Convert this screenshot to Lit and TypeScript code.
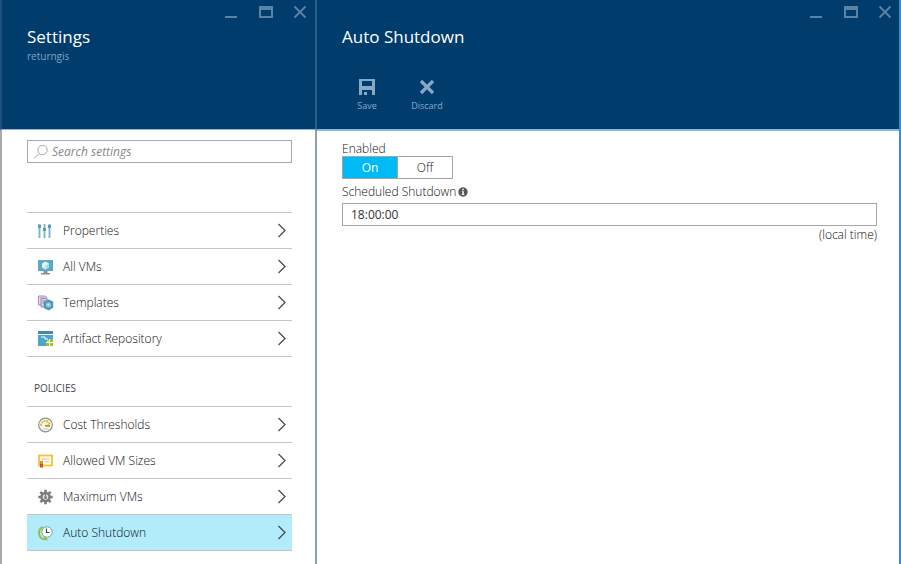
import { LitElement, html, svg, css } from "lit";
import { customElement, property, state } from "lit/decorators.js";
import { classMap } from "lit/directives/class-map.js";

const icons: Record<string, unknown> = {
  properties: svg`
    <g fill="#c3e0ea"><rect x="0" y="1" width="3" height="14"/><rect x="5" y="1" width="3" height="14"/><rect x="10" y="1" width="3" height="14"/></g>
    <g fill="#7fb2c8"><rect x="1" y="1" width="1" height="14"/><rect x="6" y="1" width="1" height="14"/><rect x="11" y="1" width="1" height="14"/></g>
    <g fill="#5c9ab6"><rect x="0" y="2" width="3" height="3"/><rect x="5" y="5" width="3" height="3"/><rect x="10" y="2" width="3" height="3"/></g>`,
  vms: svg`
    <rect x="0" y="1" width="15" height="11" fill="#5aa9c8"/>
    <path d="M7.500 2.500l3.500 2v4l-3.500 2-3.500-2v-4z" fill="#e0f5fa"/><path d="M7.500 6.500l3.500-2v4l-3.500 2z" fill="#a4dbea"/>
    <path d="M5.500 12h4v2h2.500v1.500H3V14h2.500z" fill="#8b9296"/>`,
  templates: svg`
    <path d="M.5 1h6.500l2 2v7H.5z" fill="#e7dcec" stroke="#a98dbb"/><path d="M3 3.500H8l2 2V12H3z" fill="#d9cae0" stroke="#a08aaf"/>
    <path d="M2.500 3h4M4.500 6h4M4.500 8h2" stroke="#a08aaf"/>
    <path d="M10.500 4.500l4.700 2v6.300l-4.700 2.700-4.700-2.500V6.800z" fill="#5296ad"/><circle cx="10.500" cy="10" r="2.700" fill="#72cbdc"/><circle cx="10.500" cy="9.800" r="1" fill="#e8fafc"/>`,
  repository: svg`
    <rect x="0" y="0" width="15" height="3" fill="#4489a9"/>
    <path d="M0 4h15v4h-4v3H8v4H0z" fill="#4ba6cf"/>
    <path d="M3 6h4v2h3" fill="none" stroke="#fff"/>
    <path d="M12 8h3v3h-3zM8 12h3v3H8zM12 12h3v3h-3z" fill="#a2c617"/><path d="M9 9h2v2H9z" fill="#c5dc62"/>`,
  cost: svg`
    <circle cx="7.500" cy="8" r="6.800" fill="#f8f7ef" stroke="#8d9092" stroke-width="1.200"/>
    <path d="M3.200 9a4.300 4.300 0 0 1 8.500-1.500" fill="none" stroke="#d6c23b" stroke-width="2" stroke-dasharray="2 .7"/>
    <path d="M6.500 8l5.500-.5v2.200H7.500z" fill="#b99a18"/><path d="M4.500 12h6" stroke="#c4c6c7"/>`,
  sizes: svg`
    <rect x="1" y="2.500" width="13" height="10" fill="#fffdf2" stroke="#f3c33c" stroke-width="1.800"/>
    <path d="M3.500 6h8M7 9h4.500" stroke="#d9c48c" stroke-width="1"/>
    <rect x="2" y="8" width="3" height="4" fill="#e08a38"/><path d="M2 11h3v4l-1.500-1L2 15z" fill="#c9561a"/>`,
  gear: svg`
    <path d="M7.500 .8v14.400M.3 8h14.400M2.400 2.900l10.200 10.200M12.600 2.900L2.400 13.100" stroke="#7a7c7e" stroke-width="2.600"/>
    <circle cx="7.500" cy="8" r="5.300" fill="#7a7c7e"/><circle cx="7.500" cy="8" r="2.800" fill="#dfe0e1"/><circle cx="7.500" cy="8.500" r="1.500" fill="#7a7c7e"/><path d="M7.500 8V4.500" stroke="#7a7c7e"/>`,
  clock: svg`
    <path d="M5 2A6.500 6.500 0 0 0 5 14" fill="none" stroke="#8cc152" stroke-width="2"/>
    <path d="M5.500 3.500A5.500 5.500 0 0 0 7 13.500" fill="none" stroke="#c7e59f" stroke-width="1.200"/>
    <path d="M4 15l6 .2-2.500-4.200z" fill="#8cc152"/>
    <circle cx="9" cy="7" r="5.200" fill="#fff" stroke="#7aa5ae"/><path d="M8.500 3.500V7.500h3" fill="none" stroke="#33474f" stroke-width="1.200"/>`,
};

interface Item { icon: string; label: string }

const general: Item[] = [
  { icon: "properties", label: "Properties" },
  { icon: "vms", label: "All VMs" },
  { icon: "templates", label: "Templates" },
  { icon: "repository", label: "Artifact Repository" },
];
const policies: Item[] = [
  { icon: "cost", label: "Cost Thresholds" },
  { icon: "sizes", label: "Allowed VM Sizes" },
  { icon: "gear", label: "Maximum VMs" },
  { icon: "clock", label: "Auto Shutdown" },
];

@customElement("window-controls")
class WindowControls extends LitElement {
  static styles = css`
    :host { display: flex; justify-content: flex-end; gap: 18px; }
    button { border: 0; padding: 0; background: none; color: #5a84a6; width: 16px; height: 16px; cursor: pointer; }
    svg { display: block; }
  `;
  render() {
    return html`
      <button aria-label="Minimize"><svg width="16" height="16"><path d="M1 12h12v2H1z" fill="currentColor"/></svg></button>
      <button aria-label="Maximize"><svg width="16" height="16"><path d="M1 2h14v12H1zM3 6v6h10V6z" fill="currentColor" fill-rule="evenodd"/></svg></button>
      <button aria-label="Close"><svg width="16" height="16"><path d="M2.500 2.500l11 11M13.500 2.500l-11 11" stroke="currentColor" stroke-width="1.800"/></svg></button>
    `;
  }
}

@customElement("settings-list")
class SettingsList extends LitElement {
  @property({ attribute: false }) items: Item[] = [];
  @property() selected = "";
  static styles = css`
    :host { display: block; }
    ul { list-style: none; margin: 0; padding: 0; border-bottom: 1px solid #c3c7c9; }
    li { border-top: 1px solid #c3c7c9; }
    a { display: flex; align-items: center; gap: 9px; height: 35px; padding: 0 4px 0 11px; color: inherit; text-decoration: none; }
    .label { flex: 1; }
    .selected { background: #b2ebf9; }
    svg { display: block; flex: none; }
  `;
  render() {
    return html`<ul>${this.items.map((item) => html`
      <li>
        <a href="#" class=${classMap({ selected: item.label === this.selected })}>
          <svg width="16" height="16" viewBox="0 0 16 16" aria-hidden="true">${icons[item.icon]}</svg>
          <span class="label">${item.label}</span>
          <svg width="12" height="16" aria-hidden="true"><path d="M2.500 1L9 7.500 2.500 14" fill="none" stroke="#3f4850" stroke-width="1.200"/></svg>
        </a>
      </li>`)}</ul>`;
  }
}

@customElement("app-root")
class AppRoot extends LitElement {
  @state() private enabled = true;

  static styles = css`
    :host {
      display: grid; grid-template-columns: 317px minmax(0, 1fr); min-height: 100vh;
      font: 300 12px/16px "Open Sans", "Noto Sans", sans-serif; color: #0c0f12; background: #fff;
    }
    * { box-sizing: border-box; }
    .blade { display: flex; flex-direction: column; }
    .settings { border-left: 2px solid #a9a9ab; border-right: 2px solid #8fa0ab; }
    .detail { border-right: 2px solid #3a8ad4; }
    header { height: 130px; background: #003c6c; border-bottom: 1px solid #8ab8e2; padding: 4px 6px 0 25px; }
    .settings header { margin: 0 -2px; padding-right: 7px; border-left: 2px solid #1d4f7c; border-right: 2px solid #2a5f8c; }
    .detail header { height: 131px; border-bottom-width: 2px; }
    h1 { margin: 4px 0 0; font-size: 17px; line-height: 26px; font-weight: 400; color: #fff; }
    .sub { margin: 0; font-size: 10px; line-height: 12px; font-weight: 400; color: #7fa5c6; }
    .tools { display: flex; gap: 10px; margin-top: 28px; }
    .tools button {
      width: 50px; padding: 0; border: 0; background: none; color: #86a9c8; font: inherit; font-weight: 400; font-size: 9px; line-height: 14px;
      display: flex; flex-direction: column; align-items: center; gap: 3px; cursor: pointer;
    }
    .body { padding: 10px 23px 0 25px; }
    .detail .body { padding: 10px 22px 0 25px; }
    .search { display: flex; align-items: center; gap: 3px; height: 23px; border: 1px solid #a5a8b0; padding: 0 5px; margin-bottom: 49px; }
    .search input { flex: 1; min-width: 0; border: 0; padding: 0; outline: 0; background: none; font: inherit; font-style: italic; font-weight: 400; color: inherit; }
    .search input::placeholder { color: #85878b; }
    h2 { margin: 23px 0 10px 7px; font-size: 10px; line-height: 16px; font-weight: 400; color: #44484c; }
    fieldset { border: 0; margin: 0; padding: 0; }
    legend { padding: 0; line-height: 15px; }
    .toggle { display: flex; width: 111px; height: 23px; border: 1px solid #a3a5a6; }
    .toggle label { flex: 1; display: flex; align-items: center; justify-content: center; cursor: pointer; position: relative; }
    .toggle label + label { border-left: 1px solid #a3a5a6; }
    .toggle .on { background: #00baf5; color: #fff; font-weight: 400; }
    .toggle input { position: absolute; inset: 0; margin: 0; opacity: 0; }
    .caption { display: flex; align-items: center; gap: 2px; margin: 5px 0 3px; }
    .time { display: block; width: 100%; height: 23px; border: 1px solid #a5a7a6; padding: 0 8px; font: inherit; font-weight: 400; color: #303338; }
    .note { margin: 1px 0 0; text-align: right; }
  `;

  render() {
    return html`
      <section class="blade settings">
        <header>
          <window-controls></window-controls>
          <h1>Settings</h1>
          <p class="sub">returngis</p>
        </header>
        <div class="body">
          <div class="search">
            <svg width="16" height="16" aria-hidden="true"><circle cx="9.500" cy="6" r="4.700" fill="none" stroke="#a7a9ae"/><path d="M6 9.500L1 14.500" stroke="#a7a9ae"/></svg>
            <input type="text" placeholder="Search settings" aria-label="Search settings">
          </div>
          <settings-list .items=${general}></settings-list>
          <h2>POLICIES</h2>
          <settings-list .items=${policies} selected="Auto Shutdown"></settings-list>
        </div>
      </section>
      <section class="blade detail">
        <header>
          <window-controls></window-controls>
          <h1>Auto Shutdown</h1>
          <div class="tools">
            <button><svg width="18" height="18"><path d="M1 1h16v16h-3v-5H4v5H1zM4 3v5h10V3z" fill="currentColor" fill-rule="evenodd"/><path d="M6 14h3v3H6z" fill="currentColor"/></svg>Save</button>
            <button><svg width="18" height="18"><path d="M3 3l12 12M15 3L3 15" stroke="currentColor" stroke-width="3.200"/></svg>Discard</button>
          </div>
        </header>
        <div class="body">
          <fieldset>
            <legend>Enabled</legend>
            <div class="toggle">
              <label class=${classMap({ on: this.enabled })}><input type="radio" name="enabled" .checked=${this.enabled} @change=${() => (this.enabled = true)}>On</label>
              <label class=${classMap({ on: !this.enabled })}><input type="radio" name="enabled" .checked=${!this.enabled} @change=${() => (this.enabled = false)}>Off</label>
            </div>
          </fieldset>
          <div class="caption">
            <label for="time">Scheduled Shutdown</label>
            <svg width="10" height="10" viewBox="0 0 10 10" aria-hidden="true"><circle cx="5" cy="5" r="4.700" fill="#55585b"/><path d="M4.200 1.800h1.600v1.400H4.200zM3.800 4.200h2V7.200h.6V8H3.700v-.8h.6V5h-.5z" fill="#fff"/></svg>
          </div>
          <input class="time" id="time" type="text" value="18:00:00">
          <p class="note">(local time)</p>
        </div>
      </section>
    `;
  }
}
